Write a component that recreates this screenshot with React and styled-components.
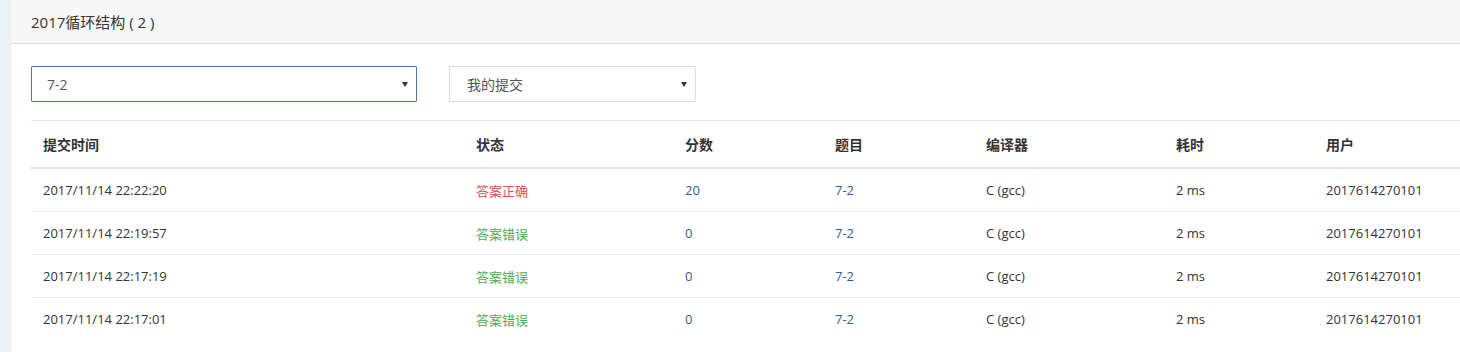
import React from "react";
import styled, { createGlobalStyle } from "styled-components";

const GlobalStyle = createGlobalStyle`
  html, body {
    margin: 0;
    padding: 0;
    background: #ffffff;
  }
  body {
    font-family: "Open Sans", "Noto Sans CJK SC", sans-serif;
    font-size: 13px;
    color: #333;
  }
`;

const Page = styled.div`
  display: flex;
  height: 352px;
  overflow: hidden;
`;

const SideStrip = styled.div`
  width: 10px;
  flex: none;
  background: #eaf2f5;
`;

const Panel = styled.div`
  flex: 1;
  min-width: 0;
  background: #fff;
  border-left: 1px solid #eeeeee;
  overflow: hidden;
`;

const PanelHeader = styled.div`
  height: 43px;
  display: flex;
  align-items: center;
  padding-left: 20px;
  background: #f7f7f7;
  border-bottom: 1px solid #dddddd;
  font-size: 15px;
  color: #333;
  white-space: pre;
`;

const PanelBody = styled.div`
  padding: 22px 0 0 20px;
`;

const Filters = styled.div`
  display: flex;
  gap: 32px;
  margin-bottom: 18px;
`;

const SelectBox = styled.div`
  position: relative;
  box-sizing: border-box;
  width: ${(p) => p.$width}px;
  height: 36px;
  display: flex;
  align-items: center;
  padding-left: ${(p) => (p.$focused ? 15 : 17)}px;
  border: 1px solid ${(p) => (p.$focused ? "#4a7bb0" : "#dcdcdc")};
  border-radius: 1px;
  color: #555;
  font-size: 14px;
  background: #fff;
`;

const Caret = styled.span`
  position: absolute;
  right: 8px;
  top: 50%;
  margin-top: -2px;
  width: 0;
  height: 0;
  border-left: 3px solid transparent;
  border-right: 3px solid transparent;
  border-top: 5px solid #333;
`;

const Table = styled.table`
  width: 1480px;
  border-collapse: collapse;
  table-layout: fixed;
`;

const HeadCell = styled.th`
  height: 46px;
  padding: 0 12px;
  text-align: left;
  font-size: 14px;
  font-weight: 700;
  color: #333;
  border-top: 1px solid #e8e8e8;
  border-bottom: 2px solid #e2e2e2;
  white-space: nowrap;
`;

const BodyRow = styled.tr`
  &:last-child td {
    border-bottom: none;
  }
`;

const Cell = styled.td`
  height: 42px;
  padding: 0 12px;
  border-bottom: 1px solid #ececec;
  color: ${(p) => p.$color || "#333"};
  white-space: nowrap;
`;

const columns = [
  { title: "提交时间", width: 433 },
  { title: "状态", width: 209 },
  { title: "分数", width: 150 },
  { title: "题目", width: 151 },
  { title: "编译器", width: 190 },
  { title: "耗时", width: 150 },
  { title: "用户", width: 197 },
];

const rows = [
  { time: "2017/11/14 22:22:20", ok: true, score: 20 },
  { time: "2017/11/14 22:19:57", ok: false, score: 0 },
  { time: "2017/11/14 22:17:19", ok: false, score: 0 },
  { time: "2017/11/14 22:17:01", ok: false, score: 0 },
];

const LINK = "#2b5f91";

export default function App() {
  return (
    <>
      <GlobalStyle />
      <Page>
        <SideStrip />
        <Panel>
          <PanelHeader>2017循环结构 ( 2 )</PanelHeader>
          <PanelBody>
            <Filters>
              <SelectBox $width={386} $focused>
                7-2
                <Caret />
              </SelectBox>
              <SelectBox $width={247}>
                我的提交
                <Caret />
              </SelectBox>
            </Filters>
            <Table>
              <colgroup>
                {columns.map((c) => (
                  <col key={c.title} style={{ width: c.width }} />
                ))}
              </colgroup>
              <thead>
                <tr>
                  {columns.map((c) => (
                    <HeadCell key={c.title}>{c.title}</HeadCell>
                  ))}
                </tr>
              </thead>
              <tbody>
                {rows.map((r) => (
                  <BodyRow key={r.time}>
                    <Cell>{r.time}</Cell>
                    <Cell $color={r.ok ? "#d9534f" : "#4cae4c"}>
                      {r.ok ? "答案正确" : "答案错误"}
                    </Cell>
                    <Cell $color={LINK}>{r.score}</Cell>
                    <Cell $color={LINK}>7-2</Cell>
                    <Cell>C (gcc)</Cell>
                    <Cell>2 ms</Cell>
                    <Cell>2017614270101</Cell>
                  </BodyRow>
                ))}
              </tbody>
            </Table>
          </PanelBody>
        </Panel>
      </Page>
    </>
  );
}
